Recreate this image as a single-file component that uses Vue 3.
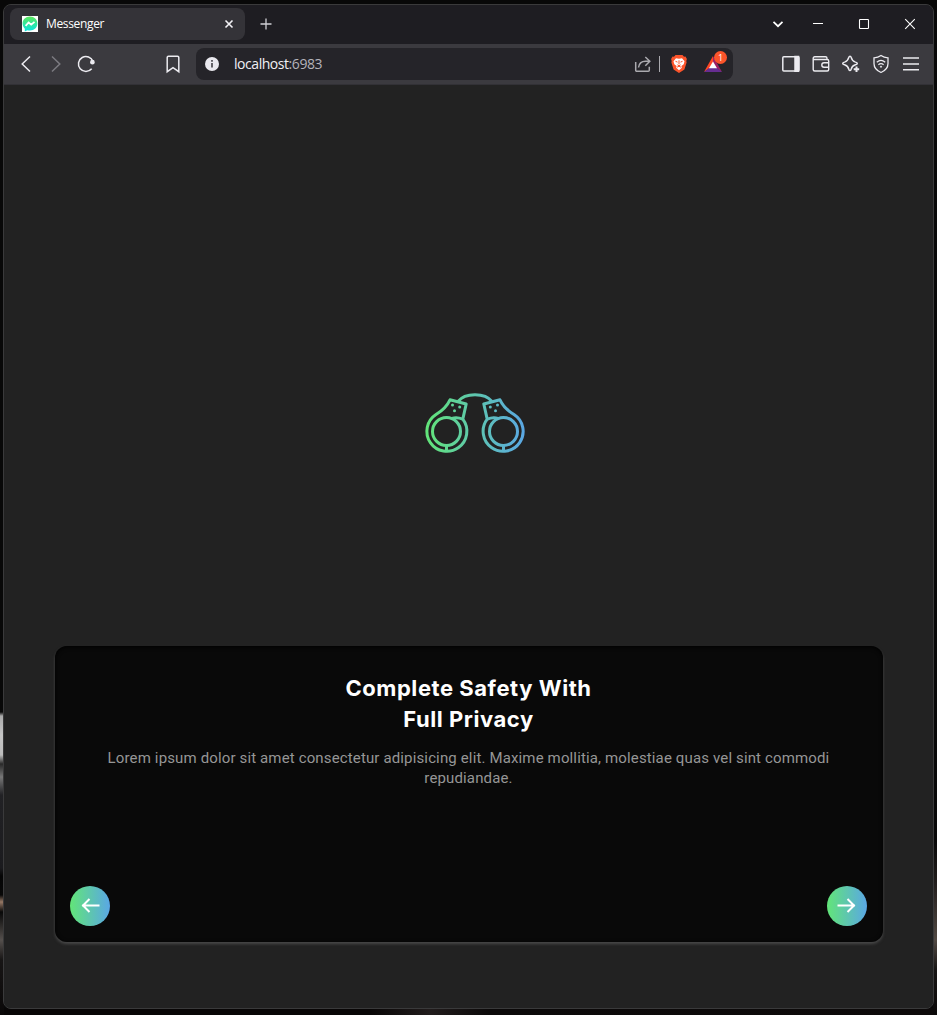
<script setup>
const title = ['Complete Safety With', 'Full Privacy']
const text = 'Lorem ipsum dolor sit amet consectetur adipisicing elit. Maxime mollitia, molestiae quas vel sint commodi repudiandae.'
</script>

<template>
  <div class="desktop">
    <div class="window">
      <header class="tabstrip">
        <div class="tab">
          <svg class="favicon" width="16" height="16" viewBox="0 0 16 16">
            <defs>
              <linearGradient id="fav" x1="0" y1="0" x2="0" y2="1">
                <stop offset="0" stop-color="#5ce85c" />
                <stop offset="1" stop-color="#08e5e3" />
              </linearGradient>
            </defs>
            <rect width="16" height="16" fill="#fff" />
            <path d="M8 .6C3.7.6.6 3.7.6 7.6c0 2.1.8 3.8 2.2 5.1v2.7l2.5-1.2c.8.3 1.7.4 2.7.4 4.300 0 7.400-3.100 7.400-7S12.300.6 8 .6Z" fill="url(#fav)" />
            <path d="m3.600 9.900 3-3.400 2.600 2.200 3.300-2.900" fill="none" stroke="#fff" stroke-width="1.700" />
          </svg>
          <span class="tab-title">Messenger</span>
          <svg class="tab-close" width="16" height="16" viewBox="0 0 16 16"><path d="m4.500 4.500 7 7m0-7-7 7" /></svg>
        </div>
        <svg class="plus" width="16" height="16" viewBox="0 0 16 16"><path d="M8 2.500v11M2.500 8h11" /></svg>
        <div class="caption">
          <span class="cap chevron"><svg width="16" height="16" viewBox="0 0 16 16"><path d="m3.500 5.800 4.500 4.400 4.500-4.400" stroke-width="1.700" /></svg></span>
          <span class="cap"><svg width="16" height="16" viewBox="0 0 16 16"><path d="M3 7.500h10" /></svg></span>
          <span class="cap"><svg width="16" height="16" viewBox="0 0 16 16"><rect x="3.500" y="3.500" width="9" height="9" rx=".7" /></svg></span>
          <span class="cap"><svg width="16" height="16" viewBox="0 0 16 16"><path d="m3.200 3.200 9.600 9.600m0-9.600-9.600 9.600" /></svg></span>
        </div>
      </header>

      <nav class="toolbar">
        <span class="tool"><svg width="20" height="20" viewBox="0 0 20 20"><path d="m14 2.500-7.800 7.500 7.800 7.500" /></svg></span>
        <span class="tool dim"><svg width="20" height="20" viewBox="0 0 20 20"><path d="m6 2.500 7.800 7.500-7.800 7.500" /></svg></span>
        <span class="tool">
          <svg width="20" height="20" viewBox="0 0 20 20">
            <path d="M15.700 14.800A7.500 7.500 0 1 1 17 7.500" />
            <circle cx="16.400" cy="8.200" r="1.600" class="solid" />
          </svg>
        </span>
        <span class="tool bookmark"><svg width="20" height="20" viewBox="0 0 20 20"><path d="M5.500 2.200h9a1.300 1.300 0 0 1 1.300 1.300v14.200L10 13.700l-5.800 4V3.500a1.300 1.300 0 0 1 1.300-1.300Z" /></svg></span>
        <div class="address">
          <svg class="info" width="14" height="14" viewBox="0 0 14 14">
            <circle cx="7" cy="7" r="7" fill="#e9e8ee" />
            <path d="M7 6v4.500M7 3v1.800" stroke="#4a484f" stroke-width="1.700" />
          </svg>
          <span class="url">localhost<span class="port">:6983</span></span>
          <svg class="share" width="18" height="18" viewBox="0 0 18 18">
            <path d="M1.700 7v8.200a1 1 0 0 0 1 1h11.600a1 1 0 0 0 1-1v-3.500M4.500 12.500c.5-4.200 3.300-6.300 7-6.300h4M11.300 2l4.500 4.200-4.500 4.500" />
          </svg>
          <span class="divider"></span>
          <svg class="brave" width="18" height="20" viewBox="0 0 18 20">
            <path d="M5.500 1h7l1.500 1.700 1.500-.2 1.400 2.500-.6 2 .3 1.400-2.200 7.200L9 19l-5.400-3.400L1.400 8.400 1.700 7l-.6-2 1.400-2.500 1.500.2Z" fill="#fb542b" />
            <path d="m6 4.200 3 .6 3-.6 2.500 3-.8 3-2.300 1.900.4 1.700L9 16.200l-2.800-2.400.4-1.700-2.300-1.900-.8-3Z" fill="#fff" />
            <path d="m5.500 7.300 2 .8M12.500 7.300l-2 .8M9 6.300v4M7.400 10.800 9 11.800l1.600-1M7 13.200l2-.9 2 .9" stroke="#fb542b" stroke-width="1" fill="none" />
          </svg>
          <span class="bat">
            <svg width="18" height="16" viewBox="0 0 18 16">
              <path d="M9 0 0 16l9-6Z" fill="#ff4724" />
              <path d="m9 0 9 16-9-6Z" fill="#9e1f63" />
              <path d="M0 16h18l-5-4H5Z" fill="#662d91" />
              <path d="m9 5.500-4 6.800h8Z" fill="#fff" />
            </svg>
            <span class="badge">1</span>
          </span>
        </div>
        <div class="right-tools">
          <span class="tool"><svg width="20" height="20" viewBox="0 0 20 20"><rect x="1.800" y="2.700" width="16.200" height="14.300" rx="1" /><path d="M14 2.500h3.500v14.700H14Z" class="solid" /></svg></span>
          <span class="tool"><svg width="20" height="20" viewBox="0 0 20 20"><path d="M2.200 5.500h14a1.500 1.500 0 0 1 1.500 1.500v8.500a1.500 1.500 0 0 1-1.500 1.500H3.700a1.500 1.500 0 0 1-1.500-1.500V4.200a1.500 1.500 0 0 1 1.500-1.500h10.800a1.500 1.500 0 0 1 1.500 1.500v1.300" stroke-width="1.400" /><path d="M17.700 8.800h-4.700a2.200 2.200 0 0 0 0 4.400h4.700" stroke-width="1.400" /></svg></span>
          <span class="tool"><svg width="20" height="20" viewBox="0 0 20 20"><path d="M9 2.300c.7 0 1 .4 1.200 1.100.6 2.900 1.300 3.800 4.200 4.700 2.500.7 2.500 1.900 0 2.600-2.900.9-3.600 1.700-4.200 4.500-.4 1.800-1.900 1.800-2.400 0-.7-2.800-1.400-3.700-4.200-4.500-2.500-.7-2.500-1.900 0-2.600 2.800-.9 3.500-1.800 4.200-4.700.2-.7.500-1.100 1.200-1.100Z" /><path d="M15.500 12.500v5.500M12.700 15.300h5.500" stroke-width="2" /></svg></span>
          <span class="tool"><svg width="20" height="20" viewBox="0 0 20 20"><path d="M10 1.500c2.300 1.700 4.200 2.200 7 2.300v5.700c0 4.500-2.800 7.200-7 9-4.200-1.800-7-4.500-7-9V3.800c2.800-.1 4.700-.6 7-2.300Z" stroke-width="1.300" /><path d="M5.800 8.200c2.500-2.100 5.900-2.100 8.400 0M7.400 10.700c1.600-1.300 3.600-1.300 5.200 0" stroke-width="1.300" /><circle cx="10" cy="12.700" r=".6" class="solid" stroke-width="1" /></svg></span>
          <span class="tool"><svg width="20" height="20" viewBox="0 0 20 20"><path d="M2 4h16M2 10h16M2 15.800h16" stroke-width="1.500" /></svg></span>
        </div>
      </nav>

      <main class="page">
        <section class="hero">
          <svg class="cuffs" width="102" height="64" viewBox="0 0 102 64" fill="none">
            <defs>
              <linearGradient id="cuff" gradientUnits="userSpaceOnUse" x1="1" y1="0" x2="101" y2="0">
                <stop offset="0" stop-color="#62e578" />
                <stop offset="1" stop-color="#5aa7e5" />
              </linearGradient>
            </defs>
            <g stroke="url(#cuff)" stroke-width="3" stroke-linejoin="round">
              <circle cx="22.500" cy="39.500" r="14" />
              <circle cx="79.500" cy="39.500" r="14" />
              <path d="M26 7.800 42.200 12 38.800 27.200A20 20 0 1 1 12 22.500C18.500 18.500 22.700 15 26 7.800Z" />
              <path d="M76 7.800 59.800 12 63.200 27.200A20 20 0 1 0 90 22.500C83.500 18.500 79.300 15 76 7.800Z" />
              <path d="M28 26.500c4-1.500 7-.8 10.800.7M74 26.500c-4-1.500-7-.8-10.800.7M22.500 53.500V60M79.500 53.500V60M34 9.500C41 .4 61 .4 68 9.500" />
            </g>
            <g fill="url(#cuff)">
              <circle cx="28.500" cy="13" r="1.500" /><circle cx="35.700" cy="15" r="1.500" /><circle cx="30.500" cy="18.700" r="1.500" />
              <circle cx="73.500" cy="13" r="1.500" /><circle cx="66.300" cy="15" r="1.500" /><circle cx="71.500" cy="18.700" r="1.500" />
            </g>
          </svg>
        </section>
        <section class="card">
          <h1><span v-for="line in title" :key="line">{{ line }}</span></h1>
          <p>{{ text }}</p>
          <div class="actions">
            <button aria-label="Previous"><svg width="24" height="24" viewBox="0 0 24 24"><path d="M21.500 11.500H4M11.500 5 5 11.500l6.500 6.500" /></svg></button>
            <button aria-label="Next"><svg width="24" height="24" viewBox="0 0 24 24"><path d="M2.500 11.500H20M12.500 5l6.500 6.500-6.500 6.500" /></svg></button>
          </div>
        </section>
      </main>
    </div>
  </div>
</template>

<style>
body { margin: 0; background: #080808; }
</style>

<style scoped>
* { box-sizing: border-box; }
svg { display: block; flex: none; }
.desktop {
  width: 937px; height: 1015px; padding: 4px 3px 6px; overflow: hidden;
  background:
    linear-gradient(#080808 0 712px, #aaa 716px, #c5c5c5 735px, #bbb 755px, #292929 764px, #777 777px, #222225 795px, #1b1b1e 868px, #050505 876px, #080808 895px, #967865 902px, #080808 912px, #55504d 940px, #171515 960px, #0a0808) 0 0 / 4px 100% no-repeat,
    linear-gradient(#080808 0 840px, #201c1b 880px, #514943 940px, #171514 970px, #0b0909) 100% 0 / 4px 100% no-repeat,
    linear-gradient(90deg, #080606 370px, #211c1c 430px, #0b0909 490px, #0d0a0a) 0 100% / 100% 7px no-repeat,
    #080808;
}
.window {
  display: flex; flex-direction: column; width: 931px; height: 1005px;
  border: 1px solid #3a3a3b; border-radius: 8px; overflow: hidden; background: #222;
}
.tabstrip { display: flex; align-items: center; height: 39px; padding-left: 6px; background: #1e1d22; flex: none; }
.tab {
  display: flex; align-items: center; width: 235px; height: 32px; margin-bottom: 1px; padding: 0 8px 0 12px;
  border-radius: 8px; background: #343338; color: #fff; font: 12px "Open Sans", "Noto Sans", sans-serif;
}
.tab-title { margin: -1px 0 0 8px; letter-spacing: -.35px; }
.tab-close { margin-left: auto; stroke: #f3f2f6; stroke-width: 1.600; }
.plus { margin: 0 0 1px 13px; stroke: #d0cfd5; stroke-width: 1.300; }
.caption { display: flex; margin: 0 0 1px auto; }
.cap { display: grid; place-items: center; width: 46px; height: 38px; }
.cap.chevron { width: 30px; margin-right: 2px; }
.cap svg { fill: none; stroke: #fff; stroke-width: 1.100; }
.toolbar { display: flex; align-items: center; height: 41px; padding: 0 7px; background: #3b3a3f; border-bottom: 1px solid #323136; flex: none; }
.tool { display: grid; place-items: center; width: 30px; height: 30px; flex: none; }
.tool svg { fill: none; stroke: #ecebf0; stroke-width: 1.500; }
.tool .solid { fill: #ecebf0; }
.tool.dim svg { stroke: #7b7a80; }
.bookmark { margin-left: 57px; }
.address {
  display: flex; align-items: center; width: 537px; height: 32px; margin-left: 8px; padding: 0 11px 0 9px;
  border-radius: 8px; background: #252429; flex: none;
}
.url { margin-left: 15px; color: #f0eff4; font: 14px/20px "Open Sans", "Noto Sans", sans-serif; letter-spacing: -.45px; }
.port { color: #b4b3ba; }
.share { margin-left: auto; fill: none; stroke: #aaa9ae; stroke-width: 1.500; }
.divider { width: 1px; height: 16px; margin: 0 10px 0 7px; background: #aaa9ae; }
.brave { margin-right: 16px; }
.bat { position: relative; }
.badge {
  position: absolute; left: 10px; top: -5px; width: 13px; height: 13px; border-radius: 50%;
  background: #fb542b; color: #fff; font: 9px/13px "Open Sans", sans-serif; text-align: center;
}
.right-tools { display: flex; margin-left: auto; }
.page { display: flex; flex-direction: column; flex: 1; padding: 0 50.5px 66.5px; background: #222; }
.hero { display: flex; justify-content: center; align-items: center; flex: 1; padding: 118px 0 0; }
.cuffs { margin-left: 13px; }
.card {
  display: flex; flex-direction: column; height: 296px; padding: 27.5px 15.5px 15.5px;
  border-radius: 12px; background: #090909; box-shadow: 0 2px 3px #484848, inset 0 1px 4px #000;
  font-family: Inter, "Liberation Sans", sans-serif; text-align: center; flex: none;
}
h1 { margin: 0; color: #fff; font-size: 22px; line-height: 31px; font-weight: 700; letter-spacing: .55px; }
h1 span { display: block; }
p { margin: 13px 30px 0; color: #969696; font-family: Roboto, "Liberation Sans", sans-serif; font-size: 15px; font-weight: 400; line-height: 20px; letter-spacing: .14px; }
.actions { display: flex; justify-content: space-between; margin-top: auto; }
button {
  display: grid; place-items: center; width: 40px; height: 40px; padding: 0; border: 0; border-radius: 50%;
  background: linear-gradient(90deg, #62e578, #5aa7e5);
}
button svg { fill: none; stroke: #fff; stroke-width: 2; }
</style>
